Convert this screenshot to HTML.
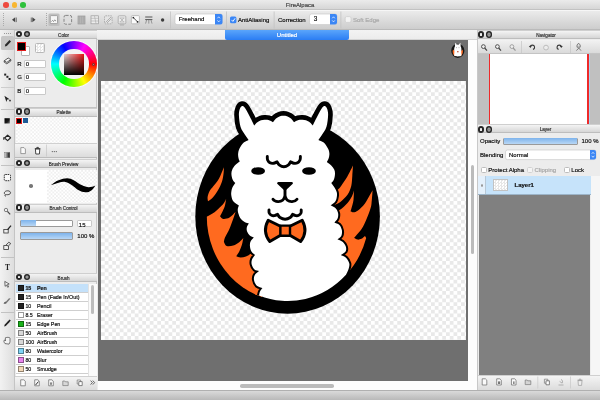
<!DOCTYPE html>
<html lang="en">
<head>
<meta charset="utf-8">
<title>FireAlpaca</title>
<style>
html,body{margin:0;padding:0;}
body{width:600px;height:400px;overflow:hidden;background:#ececec;font-family:"Liberation Sans",sans-serif;font-size:6px;color:#222;position:relative;}
.a{position:absolute;box-sizing:border-box;}
.t{-webkit-text-stroke:0.18px currentColor;transform:translateZ(0);position:absolute;white-space:nowrap;line-height:8px;height:8px;font-size:6px;color:#111;}
.titlebar{left:0;top:0;width:600px;height:9.6px;background:linear-gradient(#ebebeb,#d6d6d6);border-bottom:1px solid #c2c2c2;}
.toolbar{left:0;top:9.6px;width:600px;height:20px;background:linear-gradient(#ebebeb,#cdcdcd);border-top:1px solid #f6f6f6;border-bottom:1px solid #bababa;}
.hdr{height:9px;background:linear-gradient(#f4f4f4,#d6d6d6);border-bottom:1px solid #bdbdbd;border-top:1px solid #cfcfcf;}
.btn{width:6.2px;height:6.2px;border-radius:50%;background:#262626;}
.btn i{position:absolute;left:2px;top:2px;width:2.2px;height:2.2px;background:#f0f0f0;border-radius:0.6px;}.btn+.btn i{background:#8a8a8a;border-radius:50%;box-shadow:0 0 0 0.5px #c8c8c8;}
.chk{background-color:#fff;background-image:conic-gradient(#e6e6e6 25%,#fff 0 50%,#e6e6e6 0 75%,#fff 0);background-size:4px 4px;}
.inp{background:#fff;border:1px solid #c9c9c9;border-radius:1px;}
.sep{width:1px;background:#bdbdbd;}
.sl{border:1px solid #9a9a9a;background:#fff;}
.slf{background:linear-gradient(#7db3ec,#b9d7f5);}
.row{left:16px;width:72px;height:9px;background:#fff;border-bottom:1px solid #cfcfcf;}
.sw{position:absolute;left:1.5px;top:1.2px;width:6px;height:6px;box-sizing:border-box;border:0.5px solid rgba(0,0,0,.4);}
.cb{width:6px;height:6px;background:#fff;border:1px solid #bdbdbd;border-radius:1.5px;}
</style>
</head>
<body>
<!-- title bar -->
<div class="a titlebar"></div>
<div class="a" style="left:3.1px;top:2.2px;width:5.6px;height:5.6px;border-radius:50%;background:#ee4a3e;"></div>
<div class="a" style="left:11.6px;top:2.2px;width:5.6px;height:5.6px;border-radius:50%;background:#f8b631;"></div>
<div class="a" style="left:20px;top:2.2px;width:5.6px;height:5.6px;border-radius:50%;background:#2fc13c;"></div>
<div class="t" style="left:250px;width:100px;text-align:center;top:1px;color:#444;">FireAlpaca</div>

<!-- top toolbar -->
<div class="a toolbar"></div>
<div id="tb">
<div class="a" style="left:2.6px;top:13px;width:1px;height:14px;background:repeating-linear-gradient(#aaa 0 1px,transparent 1px 2px);"></div>
<div class="a" style="left:45.8px;top:13px;width:1px;height:14px;background:repeating-linear-gradient(#aaa 0 1px,transparent 1px 2px);"></div>
<svg class="a" style="left:0;top:10px" width="600" height="20" viewBox="0 10 600 20">
<path d="M15.2,17.3 L12,19.8 L15.2,22.3 Z" fill="#444"/><rect x="15.8" y="17.5" width="0.9" height="4.6" fill="#666"/>
<path d="M32.3,17.3 L35.5,19.8 L32.3,22.3 Z" fill="#444"/><rect x="30.8" y="17.5" width="0.9" height="4.6" fill="#666"/>
<rect x="48.4" y="13.5" width="11.2" height="12.5" rx="1.5" fill="#bfbfbf"/>
<rect x="50.3" y="15.6" width="7.2" height="8" rx="0.8" fill="#f6f6f6" stroke="#8a8a8a" stroke-width="0.7"/><path d="M51.5,21.5 l1,-1 l1,1 l1.2,-1.6 l1.3,1.2" fill="none" stroke="#666" stroke-width="0.7"/>
<rect x="64" y="15.4" width="7.6" height="8.8" rx="1.6" fill="#dedede" stroke="#7c7c7c" stroke-width="0.9" stroke-dasharray="3 1.4"/>
<rect x="78" y="16" width="7" height="8" fill="#b4b4b4" stroke="#9a9a9a" stroke-width="0.7"/><path d="M79.5,16 v7.6 M81.6,16 v7.6 M83.7,16 v7.6" stroke="#a4a4a4" stroke-width="0.6"/>
<rect x="91" y="15.8" width="7.6" height="8" fill="#ececec" stroke="#9c9c9c" stroke-width="0.7"/><path d="M91,18.3 h7.6 M91,21 h7.6 M94.5,16 l1.5,7.6" stroke="#a8a8a8" stroke-width="0.6" fill="none"/>
<rect x="104.5" y="15.8" width="7.6" height="8" rx="1" fill="#e4e4e4" stroke="#9c9c9c" stroke-width="0.7" stroke-dasharray="1.6 0.8"/><path d="M105.5,22.5 l5.6,-5.6 M107,23 l4.5,-4.5" stroke="#9a9a9a" stroke-width="0.7"/>
<rect x="118.2" y="15.8" width="7.6" height="8" rx="1" fill="#ececec" stroke="#9c9c9c" stroke-width="0.7"/><path d="M119.5,18 h5 M119.5,22 h5 M120.3,18.2 l3.4,3.6 M123.7,18.2 l-3.4,3.6" stroke="#a0a0a0" stroke-width="0.6"/><path d="M120,25 h4" stroke="#999" stroke-width="0.6"/>
<rect x="131.4" y="15.6" width="8" height="8.2" rx="1" fill="#fbfbfb" stroke="#a8a8a8" stroke-width="0.7"/><path d="M133.3,17.6 l4.3,4.3" stroke="#222" stroke-width="0.8"/><rect x="132.6" y="16.9" width="1.5" height="1.5" fill="#222"/><rect x="136.8" y="21.1" width="1.6" height="1.6" fill="#222"/>
<path d="M145.2,17 h7.2 M145.2,19.6 h7.2" stroke="#555" stroke-width="1"/><path d="M146.6,20 l-1,3.6 M148.8,20 v3.6 M151,20 l1,3.6" stroke="#777" stroke-width="0.7"/>
<circle cx="162.6" cy="20" r="1.7" fill="#3c3c3c"/>
<rect x="170" y="11.5" width="0.8" height="17" fill="#c2c2c2"/>
<rect x="226" y="11.5" width="0.8" height="17" fill="#c2c2c2"/>
<rect x="273.7" y="11.5" width="0.8" height="17" fill="#c2c2c2"/>
<rect x="340.5" y="11.5" width="0.8" height="17" fill="#c2c2c2"/>
<rect x="175" y="14" width="47.5" height="10.6" rx="2" fill="#fff" stroke="#c4c4c4" stroke-width="0.6"/>
<path d="M215,14 h5.5 a2,2 0 0 1 2,2 v6.6 a2,2 0 0 1 -2,2 h-5.5 Z" fill="#3b86f5"/><path d="M217.4,18.3 l1.3,-1.5 l1.3,1.5 M217.4,20.4 l1.3,1.5 l1.3,-1.5" stroke="#fff" stroke-width="0.7" fill="none"/>
<rect x="230" y="16.4" width="6.4" height="6.9" rx="1.5" fill="#3a86f6"/><path d="M231.5,19.9 l1.4,1.5 l2.2,-3.1" stroke="#fff" stroke-width="0.9" fill="none"/>
<rect x="309.5" y="14" width="27.5" height="10.6" rx="2" fill="#fff" stroke="#c4c4c4" stroke-width="0.6"/>
<path d="M330,14 h5 a2,2 0 0 1 2,2 v6.6 a2,2 0 0 1 -2,2 h-5 Z" fill="#3b86f5"/><path d="M332.2,18.3 l1.3,-1.5 l1.3,1.5 M332.2,20.4 l1.3,1.5 l1.3,-1.5" stroke="#fff" stroke-width="0.7" fill="none"/>
<rect x="345.2" y="16.6" width="5.8" height="5.8" rx="1.4" fill="#f4f4f4" stroke="#c6c6c6" stroke-width="0.6"/>
</svg>
<div class="t" style="left:178.7px;top:14.5px;">Freehand</div>
<div class="t" style="left:238px;top:15.5px;">AntiAliasing</div>
<div class="t" style="left:278px;top:15.5px;">Correction</div>
<div class="t" style="left:313.8px;top:14.9px;font-size:6.4px;">3</div>
<div class="t" style="left:353px;top:15.5px;color:#a9a9a9;">Soft Edge</div>
</div>

<!-- left tool strip -->
<div class="a" style="left:0;top:30px;width:15px;height:360px;background:linear-gradient(90deg,#f2f2f2,#dedede);border-right:1px solid #c4c4c4;"></div>
<div id="tools">
<div class="a" style="left:4px;top:33.2px;width:8px;height:1px;background:repeating-linear-gradient(90deg,#9a9a9a 0 1px,transparent 1px 2px);"></div>
<div class="a" style="left:1px;top:35.8px;width:13.2px;height:14.4px;background:#c6c6c6;border-radius:1.5px;"></div>
<div class="a" style="left:1px;top:87.3px;width:13px;height:1px;background:#cdcdcd;"></div><div class="a" style="left:1px;top:109px;width:13px;height:1px;background:#c2c2c2;"></div>
<div class="a" style="left:1px;top:165px;width:13px;height:1px;background:#c2c2c2;"></div>
<div class="a" style="left:1px;top:256.7px;width:13px;height:1px;background:#c2c2c2;"></div>
<div class="a" style="left:1px;top:311.7px;width:13px;height:1px;background:#c2c2c2;"></div>
<svg class="a" style="left:0;top:30px" width="15" height="360" viewBox="0 30 15 360"><path d="M4.8,46.6 l0.5,-2 l4.2,-4.6 l1.5,1.4 l-4.2,4.6 Z" fill="#2a2a2a"/><path d="M4.2,60.8 l4,-2.8 l2.6,1.6 l-4,2.8 Z" fill="#f4f4f4" stroke="#333" stroke-width="0.8" stroke-linejoin="round"/><path d="M4.2,60.8 v1.4 l2.6,1.6 l4,-2.8 v-1.4" fill="none" stroke="#333" stroke-width="0.8" stroke-linejoin="round"/><rect x="4.2" y="73.6" width="2" height="2" fill="#222"/><rect x="6.4" y="75.8" width="2" height="2" fill="#222"/><rect x="8.6" y="78" width="2" height="2" fill="#222"/><path d="M4.4,95.8 l5.2,3.4 l-2.4,0.4 l-0.8,2.4 Z" fill="#222"/><path d="M9,100.6 h2 M10,99.6 v2" stroke="#222" stroke-width="0.7"/><defs><linearGradient id="g1" x1="0" y1="0" x2="1" y2="1"><stop offset="0" stop-color="#000"/><stop offset="0.6" stop-color="#1a1a1a"/><stop offset="1" stop-color="#777"/></linearGradient><linearGradient id="g2" x1="0" y1="0" x2="1" y2="0"><stop offset="0" stop-color="#e0e0e0"/><stop offset="0.5" stop-color="#777"/><stop offset="1" stop-color="#000"/></linearGradient></defs><rect x="4.5" y="118.2" width="5.3" height="5.3" fill="url(#g1)"/><path d="M4.6,138 l3,-2.8 l3,2.6 l-3,2.8 Z" fill="#f4f4f4" stroke="#222" stroke-width="1.2" stroke-linejoin="round"/><path d="M4.200,137 c-0.900,1.100 -0.900,2.300 0.100,3" stroke="#222" stroke-width="1" fill="none"/><rect x="4.5" y="152.4" width="5.3" height="5.3" fill="url(#g2)" stroke="#666" stroke-width="0.4"/><rect x="4.3" y="174.5" width="6.2" height="6.2" rx="1" fill="#fafafa" stroke="#333" stroke-width="1" stroke-dasharray="1.6 0.7"/><path d="M5,194.4 c-1.6,-1.6 0,-3.6 2.6,-3.6 c3,0 4,2.6 1.6,3.6 c-1.6,0.6 -2.6,0.2 -3.4,0.2 c-1,0.2 -1.2,1.4 0,1.8" fill="none" stroke="#333" stroke-width="0.9"/><circle cx="6" cy="210" r="1.7" fill="#eee" stroke="#666" stroke-width="0.8"/><path d="M7.4,211.4 l2.8,3" stroke="#444" stroke-width="1.2"/><rect x="3.8" y="229.4" width="4.4" height="3.6" fill="#eee" stroke="#333" stroke-width="0.8"/><path d="M7.6,229.6 l3.4,-4" stroke="#222" stroke-width="1.3"/><rect x="3.8" y="245.6" width="4.6" height="3.8" fill="#eee" stroke="#333" stroke-width="0.8"/><path d="M6.2,244.8 l2.6,-2.6 l2,1.400 l-2.6,2.6 Z" fill="#ddd" stroke="#333" stroke-width="0.8"/><path d="M4.8,281.4 l4.4,2.6 l-1.8,0.6 l1.2,2.2 l-0.9,0.5 l-1.2,-2.2 l-1.4,1.2 Z" fill="#f4f4f4" stroke="#333" stroke-width="0.7"/><path d="M4.2,303.4 l4.8,-5.2 l1.6,0.4 l-4.8,5.4 Z" fill="#777"/><path d="M4.2,303.6 l1.2,-1.8" stroke="#222" stroke-width="0.9"/><path d="M4.2,326.4 l0.4,-1.6 l3.6,-3.8 l1.2,1.2 l-3.6,3.8 Z" fill="#222"/><path d="M7.6,321.6 l2,-2.2 l1.2,1.2 l-2,2.2 Z" fill="#222"/><path d="M5,343.6 c-1.2,-1.6 -1.6,-3.4 -0.4,-3.6 l0.8,1 v-3.2 c0.4,-0.6 1,-0.6 1.2,0 c0.2,-0.8 1,-0.8 1.2,0 c0.3,-0.6 1,-0.5 1.2,0.1 c0.4,-0.4 0.9,-0.2 1,0.4 v3.4 c0,1 -0.6,1.8 -1,2.4 Z" fill="#f2f2f2" stroke="#444" stroke-width="0.7" stroke-linejoin="round"/></svg>
<div class="t" style="left:4.9px;top:263.4px;font-family:'Liberation Serif',serif;font-weight:bold;font-size:7.4px;line-height:10px;height:10px;color:#222;-webkit-text-stroke:0;">T</div>
</div>

<!-- left panels -->
<div class="a" style="left:15px;top:30px;width:82px;height:360px;background:#ececec;border-right:1px solid #c8c8c8;"></div>
<div id="leftpanels">
<div class="a hdr" style="left:15px;top:30px;width:82px;"></div><div class="a btn" style="left:15.8px;top:30.9px;"><i></i></div><div class="a btn" style="left:23.7px;top:30.9px;"><i></i></div><div class="t" style="left:33.6px;width:60px;text-align:center;top:31.8px;font-size:4.6px;color:#333;">Color</div>
<div class="a" style="left:21px;top:46px;width:9px;height:9.5px;background:#fff;border:1px solid #b5b5b5;border-radius:1px;"></div>
<div class="a" style="left:16.6px;top:41.6px;width:9.6px;height:9.6px;background:#000;border:1px solid #e01818;"></div>
<div class="a chk" style="left:35px;top:43px;width:10px;height:10px;border:1px solid #b8b8b8;border-radius:1.5px;background-size:3px 3px;"></div>
<div class="t" style="left:17.2px;top:60px;font-size:6px;">R</div>
<div class="a inp" style="left:24.3px;top:60px;width:22px;height:8px;"></div>
<div class="t" style="left:25.8px;top:60px;">0</div>
<div class="t" style="left:17.2px;top:73px;font-size:6px;">G</div>
<div class="a inp" style="left:24.3px;top:73px;width:22px;height:8px;"></div>
<div class="t" style="left:25.8px;top:73px;">0</div>
<div class="t" style="left:17.2px;top:86.5px;font-size:6px;">B</div>
<div class="a inp" style="left:24.3px;top:86.5px;width:22px;height:8px;"></div>
<div class="t" style="left:25.8px;top:86.5px;">0</div>
<div class="a" style="left:51px;top:41px;width:46px;height:46px;border-radius:50%;box-shadow:0 0 0 1px #f8f8f8;background:conic-gradient(from 90deg,#ff0000,#ffff00,#00ff00,#00ffff,#0000ff,#ff00ff,#ff0000);"></div>
<div class="a" style="left:59.4px;top:49.4px;width:29.2px;height:29.2px;border-radius:50%;background:#f3f3f3;"></div>
<div class="a" style="left:64px;top:53.7px;width:20.3px;height:21.3px;background:linear-gradient(to top,#000,rgba(0,0,0,0)),linear-gradient(to right,#e4d4d4,#ec1414);"></div>
<div class="a" style="left:91.6px;top:63px;width:3px;height:3px;border-radius:50%;border:0.7px solid #444;background:rgba(255,255,255,.3);"></div>
<div class="a" style="left:15px;top:107px;width:82px;height:1px;background:#c4c4c4;"></div>
<div class="a hdr" style="left:15px;top:107.5px;width:82px;"></div><div class="a btn" style="left:15.8px;top:108.4px;"><i></i></div><div class="a btn" style="left:23.7px;top:108.4px;"><i></i></div><div class="t" style="left:33.6px;width:60px;text-align:center;top:109.3px;font-size:4.6px;color:#333;">Palette</div>
<div class="a chk" style="left:15.8px;top:116.6px;width:73px;height:27px;background-image:conic-gradient(#f0f0f0 25%,#fff 0 50%,#f0f0f0 0 75%,#fff 0);background-size:3.6px 3.6px;"></div>
<div class="a" style="left:88.8px;top:116.6px;width:8.2px;height:27px;background:#fafafa;"></div>
<div class="a" style="left:16.3px;top:117.5px;width:5.6px;height:6.2px;background:#000;border:1px solid #e01818;"></div>
<div class="a" style="left:23px;top:118px;width:4.6px;height:5.4px;background:#1d5a96;"></div>
<div class="a" style="left:15px;top:143px;width:82px;height:15px;background:linear-gradient(#f4f4f4,#dcdcdc);border-top:1px solid #d0d0d0;border-bottom:1px solid #bcbcbc;"></div>
<svg class="a" style="left:15px;top:143px" width="82" height="15" viewBox="15 143 82 15"><path d="M20.8,147.6 h3.2 l1.4,1.4 v4.6 h-4.6 Z" fill="#fafafa" stroke="#777" stroke-width="0.7"/><path d="M35.4,149 h4.4 l-0.4,5 h-3.6 Z" fill="#fff" stroke="#333" stroke-width="0.9"/><path d="M34.8,148.6 h5.6 M36.8,148.4 v-1 h1.600 v1" stroke="#333" stroke-width="0.9" fill="none"/><rect x="46" y="144.5" width="0.7" height="12" fill="#c6c6c6"/><circle cx="52.3" cy="151.6" r="0.6" fill="#555"/><circle cx="54.3" cy="151.6" r="0.6" fill="#555"/><circle cx="56.3" cy="151.6" r="0.6" fill="#555"/></svg>
<div class="a hdr" style="left:15px;top:159.3px;width:82px;"></div><div class="a btn" style="left:15.8px;top:160.2px;"><i></i></div><div class="a btn" style="left:23.7px;top:160.2px;"><i></i></div><div class="t" style="left:33.6px;width:60px;text-align:center;top:161.1px;font-size:4.6px;color:#333;">Brush Preview</div>
<div class="a" style="left:16px;top:169.5px;width:30.5px;height:33.5px;background:#fff;"></div>
<div class="a chk" style="left:47px;top:169.5px;width:50px;height:33.5px;background-image:conic-gradient(#efefef 25%,#fff 0 50%,#efefef 0 75%,#fff 0);background-size:3.6px 3.6px;"></div>
<div class="a" style="left:29.3px;top:184.3px;width:3.6px;height:3.6px;border-radius:50%;background:#777;"></div>
<svg class="a" style="left:47px;top:169px" width="50" height="35" viewBox="47 169 50 35"><path d="M50.8,185.3 C53.5,182.8 56,181.2 58.6,180.2 C61.5,179 64.5,178.2 67,178.2 C69.6,178.3 71.7,179 73.7,180.2 C76.8,182 79,183.8 82.1,185.3 C84.3,186.3 86.5,187.1 88.8,187.2 C91.2,187.2 93.2,186.6 95.3,185.5 C94.2,187.6 93,189.2 91.3,190.4 C89.5,191.7 87.6,192.4 85.4,192.3 C83,192.2 80.8,191.5 78.7,190.3 C76.2,188.8 74.3,186.9 72,185.2 C69.9,183.7 67.8,182.2 65.3,181.9 C63,181.7 60.7,182 58.6,182.7 C55.8,183.6 53.4,184.6 50.8,185.3 Z" fill="#000"/></svg>
<div class="a hdr" style="left:15px;top:204px;width:82px;"></div><div class="a btn" style="left:15.8px;top:204.4px;"><i></i></div><div class="a btn" style="left:23.7px;top:204.4px;"><i></i></div><div class="t" style="left:33.6px;width:60px;text-align:center;top:205.3px;font-size:4.6px;color:#333;">Brush Control</div>
<div class="a sl" style="left:20.3px;top:219.7px;width:52.8px;height:7.2px;border-radius:1px;"></div>
<div class="a slf" style="left:21px;top:220.4px;width:15px;height:5.8px;"></div>
<div class="a inp" style="left:77px;top:219.5px;width:15.3px;height:7.6px;"></div>
<div class="t" style="left:78.8px;top:220.6px;">15</div>
<div class="a sl" style="left:20.3px;top:232.2px;width:52.8px;height:7.4px;border-radius:1px;"></div>
<div class="a slf" style="left:21px;top:232.9px;width:51.4px;height:6px;"></div>
<div class="t" style="left:77.3px;top:232px;">100 %</div>
<div class="a hdr" style="left:15px;top:273px;width:82px;"></div><div class="a btn" style="left:15.8px;top:273.9px;"><i></i></div><div class="a btn" style="left:23.7px;top:273.9px;"><i></i></div><div class="t" style="left:33.6px;width:60px;text-align:center;top:274.8px;font-size:4.6px;color:#333;">Brush</div>
<div class="a" style="left:16px;top:283.5px;width:81px;height:92px;background:#fff;"></div>
<div class="a" style="left:88px;top:283.5px;width:9px;height:92px;background:#fafafa;border-left:1px solid #e2e2e2;"></div>
<div class="a" style="left:90.8px;top:285px;width:3px;height:29px;background:#bdbdbd;border-radius:1.5px;"></div>
<div class="a row" style="top:284px;background:#c4e1fa;"><span class="sw" style="background:#222;"></span></div>
<div class="t" style="left:25.4px;top:284.0px;font-size:5.3px;font-weight:bold;">15</div>
<div class="t" style="left:37px;top:284.0px;font-size:5.3px;font-weight:bold;">Pen</div>
<div class="a row" style="top:293px;background:#fff;"><span class="sw" style="background:#222;"></span></div>
<div class="t" style="left:25.4px;top:293.0px;font-size:5.3px;">15</div>
<div class="t" style="left:37px;top:293.0px;font-size:5.3px;">Pen (Fade In/Out)</div>
<div class="a row" style="top:302px;background:#fff;"><span class="sw" style="background:#222;"></span></div>
<div class="t" style="left:25.4px;top:302.0px;font-size:5.3px;">10</div>
<div class="t" style="left:37px;top:302.0px;font-size:5.3px;">Pencil</div>
<div class="a row" style="top:311px;background:#fff;"><span class="sw" style="background:#fff;"></span></div>
<div class="t" style="left:25.4px;top:311.0px;font-size:5.3px;">8.5</div>
<div class="t" style="left:37px;top:311.0px;font-size:5.3px;">Eraser</div>
<div class="a row" style="top:320px;background:#fff;"><span class="sw" style="background:#19b219;"></span></div>
<div class="t" style="left:25.4px;top:320.0px;font-size:5.3px;">15</div>
<div class="t" style="left:37px;top:320.0px;font-size:5.3px;">Edge Pen</div>
<div class="a row" style="top:329px;background:#fff;"><span class="sw" style="background:#d8d8d8;"></span></div>
<div class="t" style="left:25.4px;top:329.0px;font-size:5.3px;">50</div>
<div class="t" style="left:37px;top:329.0px;font-size:5.3px;">AirBrush</div>
<div class="a row" style="top:338px;background:#fff;"><span class="sw" style="background:#d8d8d8;"></span></div>
<div class="t" style="left:25.4px;top:338.0px;font-size:5.3px;">100</div>
<div class="t" style="left:37px;top:338.0px;font-size:5.3px;">AirBrush</div>
<div class="a row" style="top:347px;background:#fff;"><span class="sw" style="background:#7fd4f6;"></span></div>
<div class="t" style="left:25.4px;top:347.0px;font-size:5.3px;">80</div>
<div class="t" style="left:37px;top:347.0px;font-size:5.3px;">Watercolor</div>
<div class="a row" style="top:356px;background:#fff;"><span class="sw" style="background:#e884ec;"></span></div>
<div class="t" style="left:25.4px;top:356.0px;font-size:5.3px;">80</div>
<div class="t" style="left:37px;top:356.0px;font-size:5.3px;">Blur</div>
<div class="a row" style="top:365px;background:#fff;"><span class="sw" style="background:#f3d9b8;"></span></div>
<div class="t" style="left:25.4px;top:365.0px;font-size:5.3px;">50</div>
<div class="t" style="left:37px;top:365.0px;font-size:5.3px;">Smudge</div>
<div class="a" style="left:15px;top:375.5px;width:82px;height:14.5px;background:linear-gradient(#f4f4f4,#dcdcdc);border-top:1px solid #d0d0d0;"></div>
<svg class="a" style="left:15px;top:375px" width="82" height="15" viewBox="15 375 82 15"><path d="M20.7,379.8 h3.2 l1.4,1.4 v4.6 h-4.6 Z" fill="#fafafa" stroke="#666" stroke-width="0.7"/><path d="M34.7,379.8 h3.2 l1.4,1.4 v4.6 h-4.6 Z" fill="#fafafa" stroke="#666" stroke-width="0.7"/><path d="M48.7,379.8 h3.2 l1.4,1.4 v4.6 h-4.6 Z" fill="#fafafa" stroke="#666" stroke-width="0.7"/><path d="M35.6,385 l2.8,-3.4" stroke="#333" stroke-width="1"/><rect x="50" y="382.4" width="2" height="2.4" fill="#888"/><path d="M62.8,381 h2 l0.6,0.8 h2.8 v3.8 h-5.4 Z" fill="#d8d8d8" stroke="#777" stroke-width="0.7"/><path d="M77.2,380 h3.4 v4 h-3.4 Z" fill="#f4f4f4" stroke="#777" stroke-width="0.7"/><path d="M78.8,381.6 h3.4 v4 h-3.4 Z" fill="#fff" stroke="#555" stroke-width="0.7"/><path d="M90.6,380.6 l1.8,2 l-1.8,2 M92.8,380.6 l1.8,2 l-1.8,2" stroke="#444" stroke-width="0.8" fill="none"/></svg>
</div>

<!-- canvas area -->
<div id="canvasarea">
<div class="a" style="left:97px;top:30px;width:380px;height:10px;background:linear-gradient(#f3f3f3,#ececec);border-bottom:0.5px solid #d4d4d4;"></div>
<div class="a" style="left:225px;top:30px;width:124px;height:9.5px;background:linear-gradient(#5aa5fb,#2b7df3);border-radius:0 0 2px 2px;"></div>
<div class="t" style="left:225px;width:124px;text-align:center;top:31px;color:#fff;">Untitled</div>
<div class="a" style="left:98px;top:40px;width:370px;height:341px;background:#6f6f6f;"></div>
<div class="a chk" style="left:101px;top:80.5px;width:364.5px;height:259.3px;background-size:7.5px 7.5px;background-image:conic-gradient(#e9e9e9 25%,#fff 0 50%,#e9e9e9 0 75%,#fff 0);"></div>
<div class="a" style="left:467.8px;top:40px;width:9.2px;height:350px;background:#fdfdfd;"></div>
<div class="a" style="left:98px;top:381px;width:370px;height:9px;background:#fdfdfd;"></div>
<div class="a" style="left:470.7px;top:165px;width:3.4px;height:89px;background:#bbb;border-radius:1.7px;"></div>
<div class="a" style="left:240px;top:384.4px;width:94.3px;height:3.6px;background:#bbb;border-radius:1.8px;"></div>
<svg class="a" style="left:0;top:0;" width="600" height="400" viewBox="0 0 600 400">
<g id="minilogo"><ellipse cx="457.8" cy="50.8" rx="6.6" ry="7.1" fill="#161616"/><path d="M453,49.5 C452.2,52 452.8,54.6 455.4,56.4 L455.6,52 Z M462.6,49.5 C463.4,52 462.8,54.6 460.2,56.4 L460,52 Z" fill="#ff6a1f"/><path d="M454.9,46.4 l0.3,-3.6 l1.5,1.7 h2.2 l1.5,-1.700 l0.3,3.6 c1,1.700 0.800,3.900 0.500,5.400 l0.300,3.700 c-1.500,1.200 -5.900,1.200 -7.400,0 l0.300,-3.700 c-0.300,-1.500 -0.500,-3.700 0.500,-5.400 Z" fill="#fff"/><circle cx="456.6" cy="47.8" r="0.45" fill="#666"/><circle cx="459" cy="47.8" r="0.45" fill="#666"/><path d="M457,51.7 h1.600" stroke="#b8381c" stroke-width="1.100"/></g>
<g id="logo">
<defs><clipPath id="inner"><ellipse cx="287.6" cy="216.5" rx="80.8" ry="85.1"/></clipPath></defs>
<ellipse cx="287.6" cy="216.5" rx="92.3" ry="97.2" fill="#000"/>
<path d="M223.90,167.20 C223.07,169.12 220.68,175.57 218.90,178.75 C217.12,181.93 214.82,184.17 213.25,186.25 C211.68,188.33 210.44,189.46 209.50,191.25 C208.56,193.04 207.85,195.34 207.60,197.00 C207.35,198.66 207.93,200.50 208.00,201.20 C208.77,200.63 210.97,199.57 212.60,197.80 C214.23,196.03 216.23,193.32 217.80,190.60 C219.37,187.88 221.03,184.43 222.00,181.50 C222.97,178.57 223.28,175.38 223.60,173.00 C223.92,170.62 223.85,168.17 223.90,167.20 Z" fill="#ff6a1f"/>
<path d="M226.2,198.8 C225.83,199.50 224.91,201.72 224.00,203.00 C223.09,204.28 222.33,204.95 220.75,206.50 C219.17,208.05 216.96,210.55 214.50,212.30 C212.04,214.05 208.75,215.88 206.00,217.00 C203.25,218.12 199.33,218.67 198.00,219.00 L198,330 L262,330 L262,288 L259,271 L255,255 L252,253 C251.00,253.58 247.92,255.75 246.00,256.50 C244.08,257.25 242.12,257.54 240.50,257.50 C238.88,257.46 236.96,256.46 236.25,256.25 C236.79,255.38 238.54,252.96 239.50,251.00 C240.46,249.04 241.37,246.67 242.00,244.50 C242.63,242.33 243.08,239.08 243.30,238.00 C242.67,238.65 241.18,240.63 239.50,241.90 C237.82,243.17 235.40,244.92 233.25,245.60 C231.10,246.28 228.16,246.62 226.60,246.00 C225.04,245.38 224.35,242.58 223.90,241.90 C224.08,241.17 224.07,239.69 225.00,237.50 C225.93,235.31 228.12,231.88 229.50,228.75 C230.88,225.62 232.25,221.54 233.25,218.75 C234.25,215.96 235.12,213.12 235.50,212.00 C234.50,212.92 231.54,216.35 229.50,217.50 C227.46,218.65 224.83,219.11 223.25,218.90 C221.67,218.69 220.54,216.69 220.00,216.25 C220.33,215.62 221.21,214.17 222.00,212.50 C222.79,210.83 224.05,208.53 224.75,206.25 C225.45,203.97 225.96,200.04 226.20,198.80 Z" fill="#ff6a1f" clip-path="url(#inner)"/>
<path d="M353.00,165.60 C352.08,167.38 349.67,172.60 347.50,176.25 C345.33,179.90 341.83,185.04 340.00,187.50 C338.17,189.96 337.02,189.33 336.50,191.00 C335.98,192.67 337.25,195.17 336.90,197.50 C336.55,199.83 334.82,203.75 334.40,205.00 C335.33,204.54 337.82,203.96 340.00,202.25 C342.18,200.54 345.62,197.46 347.50,194.75 C349.38,192.04 350.45,189.12 351.25,186.00 C352.05,182.88 352.01,179.40 352.30,176.00 C352.59,172.60 352.88,167.33 353.00,165.60 Z" fill="#ff6a1f"/>
<path d="M353.9,190.6 C353.58,191.54 353.07,194.18 352.00,196.25 C350.93,198.32 349.50,200.75 347.50,203.00 C345.50,205.25 342.25,208.25 340.00,209.75 C337.75,211.25 335.00,211.62 334.00,212.00 L337,222 L340,239 L343,255 L346,274.8 A80.8,85.1 0 0 0 366.2,238 L365,236 C364.42,236.47 362.75,238.20 361.50,238.80 C360.25,239.40 358.72,239.77 357.50,239.60 C356.28,239.43 354.75,238.10 354.20,237.80 C355.46,236.29 359.74,231.76 361.75,228.75 C363.76,225.74 364.88,222.88 366.25,219.75 C367.62,216.62 369.12,212.67 370.00,210.00 C370.88,207.33 371.07,207.04 371.50,203.75 C371.93,200.46 372.42,192.50 372.60,190.25 C372.17,191.00 371.31,192.50 370.00,194.75 C368.69,197.00 366.75,201.12 364.75,203.75 C362.75,206.38 359.88,209.07 358.00,210.50 C356.12,211.93 354.75,212.18 353.50,212.30 C352.25,212.43 351.00,211.43 350.50,211.25 C350.62,210.88 350.75,210.88 351.25,209.00 C351.75,207.12 353.06,203.07 353.50,200.00 C353.94,196.93 353.83,192.17 353.90,190.60 Z" fill="#ff6a1f"/>
<path d="M248.60,139.90 C248.05,139.12 246.63,137.35 245.30,135.20 C243.97,133.05 241.67,130.37 240.60,127.00 C239.53,123.63 239.00,118.08 238.90,115.00 C238.80,111.92 239.43,110.00 240.00,108.50 C240.57,107.00 241.47,106.08 242.30,106.00 C243.13,105.92 243.80,106.33 245.00,108.00 C246.20,109.67 247.97,113.08 249.50,116.00 C251.03,118.92 253.42,123.92 254.20,125.50 C254.67,125.00 255.87,123.37 257.00,122.50 C258.13,121.63 259.75,120.77 261.00,120.30 C262.25,119.83 263.25,119.75 264.50,119.70 C265.75,119.65 267.08,119.58 268.50,120.00 C269.92,120.42 272.25,121.83 273.00,122.20 C273.50,121.58 274.83,119.48 276.00,118.50 C277.17,117.52 278.75,116.75 280.00,116.30 C281.25,115.85 282.33,115.80 283.50,115.80 C284.67,115.80 285.75,115.85 287.00,116.30 C288.25,116.75 289.83,117.52 291.00,118.50 C292.17,119.48 293.50,121.58 294.00,122.20 C294.75,121.83 297.08,120.42 298.50,120.00 C299.92,119.58 301.25,119.65 302.50,119.70 C303.75,119.75 304.75,119.83 306.00,120.30 C307.25,120.77 308.87,121.63 310.00,122.50 C311.13,123.37 312.33,125.00 312.80,125.50 C313.58,123.92 315.97,118.92 317.50,116.00 C319.03,113.08 320.80,109.67 322.00,108.00 C323.20,106.33 323.87,105.92 324.70,106.00 C325.53,106.08 326.43,107.00 327.00,108.50 C327.57,110.00 328.20,111.92 328.10,115.00 C328.00,118.08 327.47,123.63 326.40,127.00 C325.33,130.37 323.03,133.05 321.70,135.20 C320.37,137.35 318.95,139.12 318.40,139.90 " fill="none" stroke="#000" stroke-width="9.4" stroke-linejoin="round" stroke-linecap="round"/>
<path d="M331.25,183.10 C331.79,183.83 333.59,186.02 334.50,187.50 C335.41,188.98 336.30,190.54 336.70,192.00 C337.10,193.46 337.13,194.67 336.90,196.25 C336.67,197.83 336.35,199.99 335.30,201.50 C334.25,203.01 331.38,204.67 330.60,205.30 C331.43,205.78 334.35,206.88 335.60,208.20 C336.85,209.52 337.77,211.48 338.10,213.20 C338.43,214.92 338.22,216.95 337.60,218.50 C336.98,220.05 334.93,221.83 334.40,222.50 C335.23,222.92 338.15,223.70 339.40,225.00 C340.65,226.30 341.58,228.47 341.90,230.30 C342.22,232.13 342.03,234.48 341.30,236.00 C340.57,237.52 338.13,238.83 337.50,239.40 C338.33,239.78 341.12,240.52 342.50,241.70 C343.88,242.88 345.28,244.87 345.80,246.50 C346.32,248.13 346.44,250.08 345.60,251.50 C344.76,252.92 341.56,254.42 340.75,255.00 C341.62,255.45 344.57,256.28 346.00,257.70 C347.43,259.12 348.87,261.62 349.30,263.50 C349.73,265.38 349.15,267.12 348.60,269.00 C348.05,270.88 346.43,273.83 346.00,274.80 " fill="none" stroke="#000" stroke-width="4" stroke-linejoin="miter" stroke-miterlimit="6"/>
<path d="M235.30,183.10 C234.82,183.83 233.07,186.02 232.40,187.50 C231.73,188.98 231.47,190.58 231.30,192.00 C231.13,193.42 231.08,194.46 231.40,196.00 C231.72,197.54 232.00,199.65 233.25,201.25 C234.50,202.85 237.96,204.88 238.90,205.60 C238.72,206.17 237.92,207.77 237.80,209.00 C237.68,210.23 237.71,211.38 238.20,213.00 C238.69,214.62 239.62,217.22 240.75,218.75 C241.88,220.28 243.64,221.41 245.00,222.20 C246.36,222.99 248.25,223.28 248.90,223.50 C248.57,224.08 247.22,225.71 246.90,227.00 C246.58,228.29 246.52,229.83 247.00,231.25 C247.48,232.67 248.65,234.46 249.80,235.50 C250.95,236.54 253.22,237.17 253.90,237.50 C253.38,238.08 251.47,239.67 250.80,241.00 C250.13,242.33 249.82,243.78 249.90,245.50 C249.98,247.22 250.45,249.72 251.30,251.30 C252.15,252.88 254.38,254.38 255.00,255.00 C254.50,255.75 252.55,257.92 252.00,259.50 C251.45,261.08 251.28,262.83 251.70,264.50 C252.12,266.17 253.28,268.42 254.50,269.50 C255.72,270.58 258.25,270.75 259.00,271.00 C258.30,271.67 255.63,273.50 254.80,275.00 C253.97,276.50 253.67,278.20 254.00,280.00 C254.33,281.80 255.38,284.47 256.80,285.80 C258.22,287.13 261.55,287.63 262.50,288.00 C262.08,288.58 260.58,290.25 260.00,291.50 C259.42,292.75 259.17,294.83 259.00,295.50 " fill="none" stroke="#000" stroke-width="4" stroke-linejoin="miter" stroke-miterlimit="6"/>
<path d="M248.60,139.90 C248.05,139.12 246.63,137.35 245.30,135.20 C243.97,133.05 241.67,130.37 240.60,127.00 C239.53,123.63 239.00,118.08 238.90,115.00 C238.80,111.92 239.43,110.00 240.00,108.50 C240.57,107.00 241.47,106.08 242.30,106.00 C243.13,105.92 243.80,106.33 245.00,108.00 C246.20,109.67 247.97,113.08 249.50,116.00 C251.03,118.92 253.42,123.92 254.20,125.50 C254.67,125.00 255.87,123.37 257.00,122.50 C258.13,121.63 259.75,120.77 261.00,120.30 C262.25,119.83 263.25,119.75 264.50,119.70 C265.75,119.65 267.08,119.58 268.50,120.00 C269.92,120.42 272.25,121.83 273.00,122.20 C273.50,121.58 274.83,119.48 276.00,118.50 C277.17,117.52 278.75,116.75 280.00,116.30 C281.25,115.85 282.33,115.80 283.50,115.80 C284.67,115.80 285.75,115.85 287.00,116.30 C288.25,116.75 289.83,117.52 291.00,118.50 C292.17,119.48 293.50,121.58 294.00,122.20 C294.75,121.83 297.08,120.42 298.50,120.00 C299.92,119.58 301.25,119.65 302.50,119.70 C303.75,119.75 304.75,119.83 306.00,120.30 C307.25,120.77 308.87,121.63 310.00,122.50 C311.13,123.37 312.33,125.00 312.80,125.50 C313.58,123.92 315.97,118.92 317.50,116.00 C319.03,113.08 320.80,109.67 322.00,108.00 C323.20,106.33 323.87,105.92 324.70,106.00 C325.53,106.08 326.43,107.00 327.00,108.50 C327.57,110.00 328.20,111.92 328.10,115.00 C328.00,118.08 327.47,123.63 326.40,127.00 C325.33,130.37 323.03,133.05 321.70,135.20 C320.37,137.35 318.95,139.12 318.40,139.90 C319.29,140.33 322.13,141.03 323.75,142.50 C325.37,143.97 327.16,146.88 328.10,148.75 C329.04,150.62 329.32,152.12 329.40,153.75 C329.48,155.38 329.02,157.14 328.60,158.50 C328.18,159.86 327.18,161.33 326.90,161.90 C327.62,162.50 330.03,164.23 331.25,165.50 C332.47,166.77 333.57,168.12 334.20,169.50 C334.82,170.88 335.05,172.08 335.00,173.75 C334.95,175.42 334.52,177.94 333.90,179.50 C333.27,181.06 331.69,182.50 331.25,183.10 C331.79,183.83 333.59,186.02 334.50,187.50 C335.41,188.98 336.30,190.54 336.70,192.00 C337.10,193.46 337.13,194.67 336.90,196.25 C336.67,197.83 336.35,199.99 335.30,201.50 C334.25,203.01 331.38,204.67 330.60,205.30 C331.43,205.78 334.35,206.88 335.60,208.20 C336.85,209.52 337.77,211.48 338.10,213.20 C338.43,214.92 338.22,216.95 337.60,218.50 C336.98,220.05 334.93,221.83 334.40,222.50 C335.23,222.92 338.15,223.70 339.40,225.00 C340.65,226.30 341.58,228.47 341.90,230.30 C342.22,232.13 342.03,234.48 341.30,236.00 C340.57,237.52 338.13,238.83 337.50,239.40 C338.33,239.78 341.12,240.52 342.50,241.70 C343.88,242.88 345.28,244.87 345.80,246.50 C346.32,248.13 346.44,250.08 345.60,251.50 C344.76,252.92 341.56,254.42 340.75,255.00 C341.62,255.45 344.57,256.28 346.00,257.70 C347.43,259.12 348.87,261.62 349.30,263.50 C349.73,265.38 349.15,267.12 348.60,269.00 C348.05,270.88 346.43,273.83 346.00,274.80 A80.8,85.1 0 0 1 259.00,295.50 C259.17,294.83 259.42,292.75 260.00,291.50 C260.58,290.25 262.08,288.58 262.50,288.00 C261.55,287.63 258.22,287.13 256.80,285.80 C255.38,284.47 254.33,281.80 254.00,280.00 C253.67,278.20 253.97,276.50 254.80,275.00 C255.63,273.50 258.30,271.67 259.00,271.00 C258.25,270.75 255.72,270.58 254.50,269.50 C253.28,268.42 252.12,266.17 251.70,264.50 C251.28,262.83 251.45,261.08 252.00,259.50 C252.55,257.92 254.50,255.75 255.00,255.00 C254.38,254.38 252.15,252.88 251.30,251.30 C250.45,249.72 249.98,247.22 249.90,245.50 C249.82,243.78 250.13,242.33 250.80,241.00 C251.47,239.67 253.38,238.08 253.90,237.50 C253.22,237.17 250.95,236.54 249.80,235.50 C248.65,234.46 247.48,232.67 247.00,231.25 C246.52,229.83 246.58,228.29 246.90,227.00 C247.22,225.71 248.57,224.08 248.90,223.50 C248.25,223.28 246.36,222.99 245.00,222.20 C243.64,221.41 241.88,220.28 240.75,218.75 C239.62,217.22 238.69,214.62 238.20,213.00 C237.71,211.38 237.68,210.23 237.80,209.00 C237.92,207.77 238.72,206.17 238.90,205.60 C237.96,204.88 234.50,202.85 233.25,201.25 C232.00,199.65 231.72,197.54 231.40,196.00 C231.08,194.46 231.13,193.42 231.30,192.00 C231.47,190.58 231.73,188.98 232.40,187.50 C233.07,186.02 234.82,183.83 235.30,183.10 C234.85,182.50 233.25,181.06 232.60,179.50 C231.95,177.94 231.45,175.42 231.40,173.75 C231.35,172.08 231.65,170.96 232.30,169.50 C232.95,168.04 234.05,166.33 235.30,165.00 C236.55,163.67 239.05,162.08 239.80,161.50 C239.60,161.00 238.88,159.75 238.60,158.50 C238.32,157.25 237.95,155.67 238.10,154.00 C238.25,152.33 238.56,150.42 239.50,148.50 C240.44,146.58 242.23,143.93 243.75,142.50 C245.27,141.07 247.79,140.33 248.60,139.90 Z" fill="#fff"/>
<ellipse cx="258.1" cy="171" rx="6.9" ry="3.8" fill="#000"/>
<ellipse cx="309" cy="171" rx="6.9" ry="3.8" fill="#000"/>
<path d="M267.30,156.50 C267.35,157.08 267.15,158.95 267.60,160.00 C268.05,161.05 269.02,162.25 270.00,162.80 C270.98,163.35 272.33,163.47 273.50,163.30 C274.67,163.13 276.42,162.05 277.00,161.80 C277.42,162.37 278.37,164.37 279.50,165.20 C280.63,166.03 282.35,166.80 283.80,166.80 C285.25,166.80 287.07,166.03 288.20,165.20 C289.33,164.37 290.20,162.37 290.60,161.80 C291.17,162.05 292.83,163.13 294.00,163.30 C295.17,163.47 296.60,163.35 297.60,162.80 C298.60,162.25 299.53,161.05 300.00,160.00 C300.47,158.95 300.33,157.08 300.40,156.50 " fill="none" stroke="#000" stroke-width="2.9" stroke-linecap="round" stroke-linejoin="round"/>
<path d="M278.3,183.2 L291.7,183.2 L285,189.4 Z" fill="#000" stroke="#000" stroke-width="2.4" stroke-linejoin="round"/>
<path d="M285,188 L285,195.5 C284.5,199.5 281.5,201.8 278,201.6 C275.5,201.4 273.8,200.5 273,199.3 M285,195.5 C285.5,199.5 288.5,201.8 292,201.6 C294.5,201.4 296.2,200.5 297,199.3" fill="none" stroke="#000" stroke-width="2.9" stroke-linecap="round"/>
<path d="M269.00,210.00 C269.03,210.50 268.78,212.12 269.20,213.00 C269.62,213.88 270.62,214.87 271.50,215.30 C272.38,215.73 273.48,215.77 274.50,215.60 C275.52,215.43 277.08,214.52 277.60,214.30 C278.00,214.83 278.75,216.68 280.00,217.50 C281.25,218.32 283.40,219.20 285.10,219.20 C286.80,219.20 288.95,218.32 290.20,217.50 C291.45,216.68 292.20,214.83 292.60,214.30 C293.12,214.52 294.68,215.43 295.70,215.60 C296.72,215.77 297.82,215.73 298.70,215.30 C299.58,214.87 300.58,213.88 301.00,213.00 C301.42,212.12 301.17,210.50 301.20,210.00 " fill="none" stroke="#000" stroke-width="2.9" stroke-linecap="round" stroke-linejoin="round"/>
<path d="M281,226.5 L268.2,220.2 C264.5,227 264.5,235 269.8,241.6 L281,235 Z" fill="#ff6a1f" stroke="#000" stroke-width="2.9" stroke-linejoin="round"/>
<path d="M289.4,226.5 L302.2,220.2 C305.9,227 305.9,235 300.6,241.6 L289.4,235 Z" fill="#ff6a1f" stroke="#000" stroke-width="2.9" stroke-linejoin="round"/>
<rect x="280.4" y="225.6" width="9.6" height="10.2" fill="#ff6a1f" stroke="#000" stroke-width="2.4" stroke-linejoin="round"/>
</g>
</svg>
</div>

<!-- right panels -->
<div id="rightpanels">
<div class="a" style="left:477px;top:30px;width:123px;height:360px;background:#ececec;border-left:1px solid #c8c8c8;"></div>
<div class="a hdr" style="left:477.5px;top:30px;width:122.5px;"></div><div class="a btn" style="left:477.7px;top:31.4px;"><i></i></div><div class="a btn" style="left:485.5px;top:31.4px;"><i></i></div><div class="t" style="left:516px;width:60px;text-align:center;top:31.8px;font-size:4.6px;color:#333;">Navigator</div>
<div class="a" style="left:477.5px;top:40px;width:122.5px;height:14px;background:linear-gradient(#f2f2f2,#dadada);border-bottom:1px solid #c4c4c4;"></div>
<svg class="a" style="left:477px;top:40px" width="123" height="14" viewBox="477 40 123 14"><circle cx="483.4" cy="46.6" r="1.9" fill="#eee" stroke="#444" stroke-width="0.9"/><path d="M484.7,48 l2.3,2.6" stroke="#444" stroke-width="1.2"/><circle cx="497.4" cy="46.6" r="1.9" fill="#eee" stroke="#444" stroke-width="0.9"/><path d="M498.7,48 l2.3,2.6" stroke="#444" stroke-width="1.2"/><circle cx="511.9" cy="46.6" r="1.9" fill="#eee" stroke="#999" stroke-width="0.9"/><path d="M513.2,48 l2.3,2.6" stroke="#999" stroke-width="1.2"/><rect x="521.3" y="41" width="0.7" height="12" fill="#c4c4c4"/><rect x="570" y="41" width="0.7" height="12" fill="#c4c4c4"/><path d="M533,49.4 a2.2,2.2 0 1 0 -2.8,-2.4" fill="none" stroke="#333" stroke-width="1.1"/><path d="M528.8,46 l1.6,2 l1.5,-2.2 Z" fill="#333"/><circle cx="546" cy="47.6" r="2.4" fill="#ececec" stroke="#bdbdbd" stroke-width="1"/><path d="M558.6,49.4 a2.2,2.2 0 1 1 2.8,-2.4" fill="none" stroke="#333" stroke-width="1.1"/><path d="M562.8,46 l-1.6,2 l-1.5,-2.2 Z" fill="#333"/><path d="M577,45 l1.6,-1.8 l1.6,1.8 v2.2 h-3.2 Z M576.4,50.6 l2.4,-2.6 l2.2,2.6" fill="#ddd" stroke="#555" stroke-width="0.7"/></svg>
<div class="a" style="left:478px;top:54px;width:122px;height:70px;background:#c0c0c0;"></div>
<div class="a" style="left:489px;top:54px;width:100px;height:70px;background:#fff;border-left:1.4px solid #ee2a2a;border-right:2px solid #ee2a2a;box-shadow:1px 0 0 #a9d3ee;"></div>
<div class="a hdr" style="left:477.5px;top:124px;width:122.5px;"></div><div class="a btn" style="left:477.7px;top:126.4px;"><i></i></div><div class="a btn" style="left:485.5px;top:126.4px;"><i></i></div><div class="t" style="left:515.5px;width:60px;text-align:center;top:125.8px;font-size:4.6px;color:#333;">Layer</div>
<div class="t" style="left:480px;top:137px;">Opacity</div>
<div class="a sl" style="left:503px;top:137.5px;width:74.5px;height:7px;border-radius:1px;"></div>
<div class="a slf" style="left:503.7px;top:138.2px;width:73.1px;height:5.6px;"></div>
<div class="t" style="left:581.5px;top:137px;">100 %</div>
<div class="t" style="left:480px;top:150.8px;">Blending</div>
<svg class="a" style="left:500px;top:148px" width="100" height="14" viewBox="500 148 100 14"><rect x="505.5" y="150" width="90.5" height="9.6" rx="2" fill="#fff" stroke="#c4c4c4" stroke-width="0.6"/><path d="M590,150 h4 a2,2 0 0 1 2,2 v5.6 a2,2 0 0 1 -2,2 h-4 Z" fill="#3b86f5"/><path d="M591.7,153.8 l1.3,-1.5 l1.3,1.5 M591.7,155.8 l1.3,1.5 l1.3,-1.5" stroke="#fff" stroke-width="0.7" fill="none"/></svg>
<div class="t" style="left:509px;top:150.6px;">Normal</div>
<div class="a cb" style="left:480.5px;top:167px;"></div>
<div class="t" style="left:488.3px;top:166.3px;">Protect Alpha</div>
<div class="a cb" style="left:527.3px;top:167px;border-color:#d2d2d2;background:#f4f4f4;"></div>
<div class="t" style="left:534.5px;top:166.3px;color:#a6a6a6;">Clipping</div>
<div class="a cb" style="left:563.7px;top:167px;"></div>
<div class="t" style="left:571.3px;top:166.3px;">Lock</div>
<div class="a" style="left:478.8px;top:176px;width:111.7px;height:198.5px;background:#808080;"></div>
<div class="a" style="left:590.5px;top:176px;width:9.5px;height:198.5px;background:#f6f6f6;"></div>
<div class="a" style="left:478px;top:176px;width:112.5px;height:18.5px;background:#c6e3fa;border-bottom:1px solid #9cb4c8;"></div>
<div class="a" style="left:478px;top:176px;width:8.4px;height:18px;background:#e4f0fb;border-right:1px solid #b8c8d6;"></div>
<div class="a" style="left:480.8px;top:184px;width:2.6px;height:2.6px;border-radius:50%;background:#c9c9c9;border:0.5px solid #999;"></div>
<div class="a chk" style="left:492.5px;top:179.3px;width:15px;height:11.4px;border:1px solid #c2c2c2;background-color:#f6f6f6;background-size:3px 3px;"></div>
<div class="t" style="left:514.5px;top:181px;font-weight:bold;">Layer1</div>
<div class="a" style="left:477.5px;top:374.5px;width:122.5px;height:15.5px;background:linear-gradient(#f4f4f4,#dcdcdc);border-top:1px solid #d0d0d0;"></div>
<svg class="a" style="left:477px;top:375px" width="123" height="15" viewBox="477 375 123 15"><path d="M482.2,378.8 h3.2 l1.4,1.4 v4.8 h-4.6 Z" fill="#fafafa" stroke="#666" stroke-width="0.7"/><path d="M496.7,378.8 h3.2 l1.4,1.4 v4.8 h-4.6 Z" fill="#fafafa" stroke="#666" stroke-width="0.7"/><path d="M511.45,378.8 h3.2 l1.4,1.4 v4.8 h-4.6 Z" fill="#fafafa" stroke="#666" stroke-width="0.7"/><rect x="498" y="381.4" width="2.2" height="2.6" fill="#777"/><rect x="513" y="381.4" width="1.6" height="2.6" fill="#888"/><path d="M525.2,380 h2 l0.6,0.8 h3 v3.8 h-5.6 Z" fill="#d4d4d4" stroke="#777" stroke-width="0.7"/><path d="M544.4,379.2 h3.4 v4 h-3.4 Z" fill="#f4f4f4" stroke="#777" stroke-width="0.7"/><path d="M546,380.8 h3.4 v4 h-3.4 Z" fill="#fff" stroke="#555" stroke-width="0.7"/><path d="M558.5,385 h5 M561,379.4 c1.6,0.6 2,2.4 1.2,3.6 M559.6,381.4 l2.6,1.8" stroke="#999" stroke-width="0.7" fill="none"/><path d="M578,380.6 h4 l-0.4,4.8 h-3.2 Z" fill="#eee" stroke="#999" stroke-width="0.7"/><path d="M577.4,380.2 h5.2 M579.2,380 v-0.9 h1.600 v0.9" stroke="#999" stroke-width="0.7" fill="none"/><rect x="537.5" y="376.5" width="0.7" height="12" fill="#c8c8c8"/><rect x="570" y="376.5" width="0.7" height="12" fill="#c8c8c8"/></svg>
</div>

<!-- status bar -->
<div class="a" style="left:0;top:390px;width:600px;height:10px;background:linear-gradient(#dadada,#b9b9b9);border-top:1px solid #b0b0b0;"></div>
</body>
</html>
